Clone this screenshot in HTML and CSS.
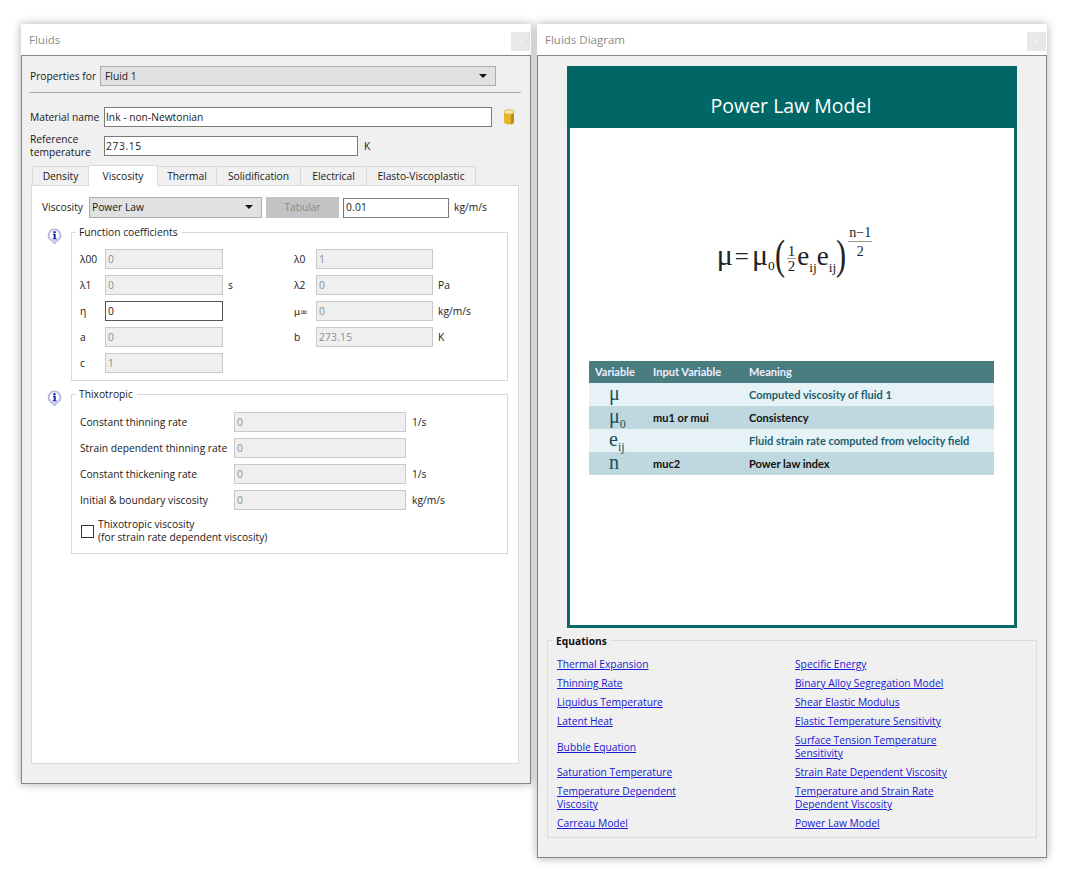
FILE: index.html
```html
<!DOCTYPE html>
<html lang="en">
<head>
<meta charset="utf-8">
<title>Fluids</title>
<link rel="stylesheet" href="styles.css">
</head>
<body>
<section class="window win-left">
  <header class="titlebar"><span>Fluids</span><span class="close">×</span></header>
  <div class="win-body">
    <div class="row row-props"><span class="lab-props">Properties for</span><div class="combo combo-fluid">Fluid 1</div></div>
    <hr class="rule">
    <div class="row row-mat"><span class="lab-mat">Material name</span><div class="field f-mat">Ink - non-Newtonian</div>
      <svg class="cyl" width="12" height="16" viewBox="0 0 12 16"><path d="M1 3v10c0 1.500 2.200 2.500 5 2.500s5-1 5-2.500V3z" fill="#e3b52c"/><path d="M8 3.500h3V13c0 1.300-1.400 2.200-3 2.400z" fill="#b98d14"/><ellipse cx="6" cy="3" rx="5" ry="2.300" fill="#f6e59a" stroke="#c9a12a" stroke-width=".6"/></svg>
    </div>
    <div class="row row-ref"><span class="lab-mat lab-two">Reference<br>temperature</span><div class="field f-ref">273.15</div><span class="unit-k">K</span></div>
    <nav class="tabs">
      <span class="tab t1">Density</span><span class="tab t2 active">Viscosity</span><span class="tab t3">Thermal</span><span class="tab t4">Solidification</span><span class="tab t5">Electrical</span><span class="tab t6">Elasto-Viscoplastic</span>
    </nav>
    <div class="pane">
      <div class="row row-visc"><span class="lab-visc">Viscosity</span><div class="combo combo-visc">Power Law</div><div class="btn">Tabular</div><div class="field f-visc">0.01</div><span class="unit-visc">kg/m/s</span></div>

      <div class="group-wrap gw1">
        <svg class="info" width="15" height="17" viewBox="0 0 15 17"><path d="M7.500 1a6.300 6.300 0 0 0-2.600 12l2.600 3 2.600-3a6.300 6.300 0 0 0-2.600-12z" fill="#cfcfee" stroke="#9a9ac4" stroke-width=".8"/><circle cx="7.500" cy="7.200" r="4.600" fill="#fff"/><circle cx="7.500" cy="4.300" r="1.200" fill="#1c28b4"/><path d="M6 6h2.700v4.300h1v1H5.700v-1h1V7H6z" fill="#1c28b4"/></svg>
        <div class="group g1">
          <span class="legend">Function coefficients</span>
          <div class="coef-grid">
            <span>λ00</span><div class="field off">0</div><span></span><span>λ0</span><div class="field off">1</div><span></span>
            <span>λ1</span><div class="field off">0</div><span class="u">s</span><span>λ2</span><div class="field off">0</div><span class="u">Pa</span>
            <span>η</span><div class="field focus">0</div><span></span><span class="mu-inf">μ∞</span><div class="field off">0</div><span class="u">kg/m/s</span>
            <span>a</span><div class="field off">0</div><span></span><span>b</span><div class="field off">273.15</div><span class="u">K</span>
            <span>c</span><div class="field off">1</div>
          </div>
        </div>
      </div>

      <div class="group-wrap gw2">
        <svg class="info" width="15" height="17" viewBox="0 0 15 17"><path d="M7.500 1a6.300 6.300 0 0 0-2.600 12l2.600 3 2.600-3a6.300 6.300 0 0 0-2.600-12z" fill="#cfcfee" stroke="#9a9ac4" stroke-width=".8"/><circle cx="7.500" cy="7.200" r="4.600" fill="#fff"/><circle cx="7.500" cy="4.300" r="1.200" fill="#1c28b4"/><path d="M6 6h2.700v4.300h1v1H5.700v-1h1V7H6z" fill="#1c28b4"/></svg>
        <div class="group g2">
          <span class="legend">Thixotropic</span>
          <div class="thixo-grid">
            <span>Constant thinning rate</span><div class="field off">0</div><span class="u">1/s</span>
            <span>Strain dependent thinning rate</span><div class="field off">0</div><span></span>
            <span>Constant thickening rate</span><div class="field off">0</div><span class="u">1/s</span>
            <span>Initial &amp; boundary viscosity</span><div class="field off">0</div><span class="u">kg/m/s</span>
          </div>
          <div class="check-row"><span class="check"></span><span>Thixotropic viscosity<br>(for strain rate dependent viscosity)</span></div>
        </div>
      </div>
    </div>
  </div>
</section>

<section class="window win-right">
  <header class="titlebar"><span>Fluids Diagram</span><span class="close">×</span></header>
  <div class="win-body body-right">
    <div class="card">
      <h1 class="card-title">Power Law Model</h1>
      <div class="formula-area">
        <div class="formula">
          <span class="m">μ</span><span class="eq">=</span><span class="m">μ</span><span class="sub s0">0</span>
          <span class="paren">(</span>
          <span class="frac small"><span class="num">1</span><span class="den">2</span></span>
          <span class="e">e</span><span class="sub">ij</span><span class="e">e</span><span class="sub">ij</span>
          <span class="paren">)</span>
          <span class="frac exp"><span class="num">n−1</span><span class="den">2</span></span>
        </div>
      </div>
      <table class="vars">
        <thead><tr><th class="c1">Variable</th><th class="c2">Input Variable</th><th>Meaning</th></tr></thead>
        <tbody>
          <tr class="light"><td class="sym">μ</td><td></td><td class="teal">Computed viscosity of fluid 1</td></tr>
          <tr class="dark"><td class="sym">μ<sub>0</sub></td><td>mu1 or mui</td><td>Consistency</td></tr>
          <tr class="light"><td class="sym">e<sub>ij</sub></td><td></td><td class="teal">Fluid strain rate computed from velocity field</td></tr>
          <tr class="dark"><td class="sym">n</td><td>muc2</td><td>Power law index</td></tr>
        </tbody>
      </table>
    </div>
    <div class="eq-group">
      <span class="eq-title">Equations</span>
      <div class="links">
        <a href="#">Thermal Expansion</a><a href="#">Specific Energy</a>
        <a href="#">Thinning Rate</a><a href="#">Binary Alloy Segregation Model</a>
        <a href="#">Liquidus Temperature</a><a href="#">Shear Elastic Modulus</a>
        <a href="#">Latent Heat</a><a href="#">Elastic Temperature Sensitivity</a>
        <a href="#">Bubble Equation</a><a href="#">Surface Tension Temperature<br>Sensitivity</a>
        <a href="#">Saturation Temperature</a><a href="#">Strain Rate Dependent Viscosity</a>
        <a href="#">Temperature Dependent<br>Viscosity</a><a href="#">Temperature and Strain Rate<br>Dependent Viscosity</a>
        <a href="#">Carreau Model</a><a href="#">Power Law Model</a>
      </div>
    </div>
  </div>
</section>
</body>
</html>
```
FILE: styles.css
```css
* { box-sizing: border-box; }
html, body { margin: 0; height: 875px; overflow: hidden; }
body {
  background: #fff;
  padding: 24px 0 0 21px;
  display: flex;
  align-items: flex-start;
  gap: 6px;
  font: 10.25px/13px "Open Sans", "Noto Sans", sans-serif;
  color: #1a1a1a;
}
.window { width: 510px; box-shadow: 0 0 9px rgba(0,0,0,.32); background: #fff; }
.titlebar {
  height: 31px; display: flex; align-items: center; justify-content: space-between;
  padding: 0 1px 0 8px; font-size: 11.5px; color: #8c8c8c; background: #fff;
}
.close {
  width: 19px; height: 19px; margin-top: 3px; background: #e8e8e8; color: #f4f4f4;
  font-size: 10px; display: flex; align-items: center; justify-content: center;
}
.win-body { background: #f0f0f0; border: 1px solid #868686; padding: 10px 11px 19px 8px; }
.row { display: flex; align-items: center; }
.combo {
  height: 20px; background: #e1e1e1; border: 1px solid #adadad; padding-left: 4px;
  display: flex; align-items: center; position: relative;
}
.combo::after {
  content: ""; position: absolute; right: 8px; top: 7px;
  border: 4px solid transparent; border-top: 4px solid #111; border-bottom: 0;
}
.lab-props { width: 70px; }
.combo-fluid { width: 396px; }
.rule { border: 0; border-top: 1px solid #a8a8a8; margin: 6px -2px 0 -1px; height: 1px; }
.field {
  height: 20px; background: #fff; border: 1px solid #7a7a7a; padding-left: 2px;
  display: flex; align-items: center; letter-spacing: .2px;
}
.field.off { background: #efefef; border-color: #c9c9c9; color: #8d8d8d; }
.field.focus { border-color: #555; }
.row-mat { margin-top: 14px; }
.lab-mat { width: 74px; }
.f-mat { width: 388px; padding-left: 1px; letter-spacing: 0; }
.cyl { margin-left: 11px; }
.row-ref { margin-top: 9px; height: 20px; }
.f-ref { width: 254px; padding-left: 1px; letter-spacing: .6px; }
.unit-k { margin-left: 6px; }
.tabs { display: flex; margin: 10px 0 0 2px; height: 19px; align-items: flex-end; position: relative; z-index: 1; }
.tab {
  height: 19px; border: 1px solid #d9d9d9; border-left: 0; border-bottom: 0; background: #f0f0f0;
  display: flex; align-items: center; justify-content: center;
}
.t1 { width: 57px; border-left: 1px solid #d9d9d9; }
.t2 { width: 69px; }
.t3 { width: 59px; }
.t4 { width: 84px; }
.t5 { width: 66px; }
.t6 { width: 109px; }
.tab.active { height: 21px; background: #fff; margin-bottom: -1px; }
.pane { margin-left: 1px; width: 488px; height: 579px; background: #fff; border: 1px solid #d9d9d9; padding: 11px 0 0 10px; }
.lab-visc { width: 47px; }
.combo-visc { width: 173px; height: 21px; padding-left: 2px; }
.btn { width: 73px; height: 21px; margin-left: 4px; background: #c3c3c3; color: #8a8a8a; display: flex; align-items: center; justify-content: center; }
.f-visc { width: 106px; margin-left: 4px; }
.unit-visc { margin-left: 5px; }
.group-wrap { display: flex; align-items: flex-start; margin-top: 13px; }
.gw1 { margin-top: 14px; }
.info { margin: -4px 9px 0 5px; flex: none; }
.group { position: relative; width: 437px; border: 1px solid #d9d9d9; padding-left: 8px; flex: none; }
.g1 { height: 149px; padding-top: 16px; }
.g2 { height: 160px; padding-top: 17px; }
.legend { position: absolute; left: 4px; top: -7px; background: #fff; padding: 0 4px 0 3px; }
.coef-grid { display: grid; grid-template-columns: 25px 118px 71px 22px 117px auto; grid-auto-rows: 20px; row-gap: 6px; align-items: center; }
.mu-inf { font-family: "DejaVu Sans", sans-serif; font-size: 9.5px; white-space: nowrap; }
.thixo-grid { display: grid; grid-template-columns: 154px 172px auto; grid-auto-rows: 20px; row-gap: 6px; align-items: center; }
.u { padding-left: 5px; }
.thixo-grid .u { padding-left: 6px; }
.check-row { display: flex; align-items: center; gap: 4px; margin-top: 8px; margin-left: 1px; }
.check { width: 13px; height: 13px; border: 1px solid #333; background: #fff; flex: none; }

.body-right { padding: 10px 9px 19px 9px; }
.card { margin-left: 20px; width: 450px; height: 562px; background: #fff; border: 3px solid #0b6766; }
.card-title {
  margin: -3px -3px 0; height: 62px; background: #006666; color: #fff; font-weight: 400; font-size: 19.500px; line-height: 24px;
  text-align: center; padding-top: 28px; padding-right: 2px;
}
.formula-area { height: 233px; padding-top: 97px; }
.formula { display: flex; justify-content: center; height: 60px; padding-left: 5px; font-family: "Liberation Serif", serif; color: #222; align-items: flex-start; }
.m { font-size: 30px; line-height: 30px; margin-top: 15px; }
.eq { font-size: 25px; line-height: 30px; margin: 17px 3px 0 2px; }
.e { font-size: 27px; line-height: 30px; margin-top: 16px; }
.sub { font-size: 13.500px; line-height: 14px; margin-top: 36px; }
.s0 { margin-top: 34px; }
.paren { font-size: 42px; line-height: 42px; margin: 9px -2px 0; transform: scaleX(.72); }
.frac { display: flex; flex-direction: column; align-items: center; }
.small { font-size: 15px; line-height: 14px; margin: 19px 1px 0 2px; }
.exp { font-size: 14px; line-height: 16px; margin: 0 0 0 2px; }
.exp .den { margin-top: 2px; }
.num { padding: 0 1px; border-bottom: 1px solid #999; display: block; text-align: center; }
.vars { margin-left: 19px; width: 405px; border-collapse: collapse; table-layout: fixed; font: 700 11.050px/13px Lato, "Open Sans", sans-serif; color: #111; }
.vars th { height: 22px; background: #4a7d80; color: #eef; text-align: left; padding: 0 0 2px; font-weight: 700; }
.c1 { width: 64px; padding-left: 6px !important; }
.c2 { width: 96px; }
.vars td { height: 23px; padding: 0; }
.light { background: #e6f2f6; }
.dark { background: #bfd7de; }
.teal { color: #1c5f70; }
.vars td.sym { font: 400 20px/20px "Liberation Serif", serif; color: #14505a; padding: 0 0 3px 20px; }
.sym sub { font-size: 12px; line-height: 0; }
.eq-group { position: relative; margin-top: 12px; width: 490px; height: 198px; border: 1px solid #dcdcdc; padding: 17px 0 0 9px; }
.eq-title { position: absolute; left: 5px; top: -6px; background: #f0f0f0; padding: 0 3px; font-weight: 700; color: #111; }
.links { display: grid; grid-template-columns: 238px 1fr; row-gap: 6px; align-items: center; }
.links a { color: #1a1ad0; text-decoration: underline; justify-self: start; }
```
